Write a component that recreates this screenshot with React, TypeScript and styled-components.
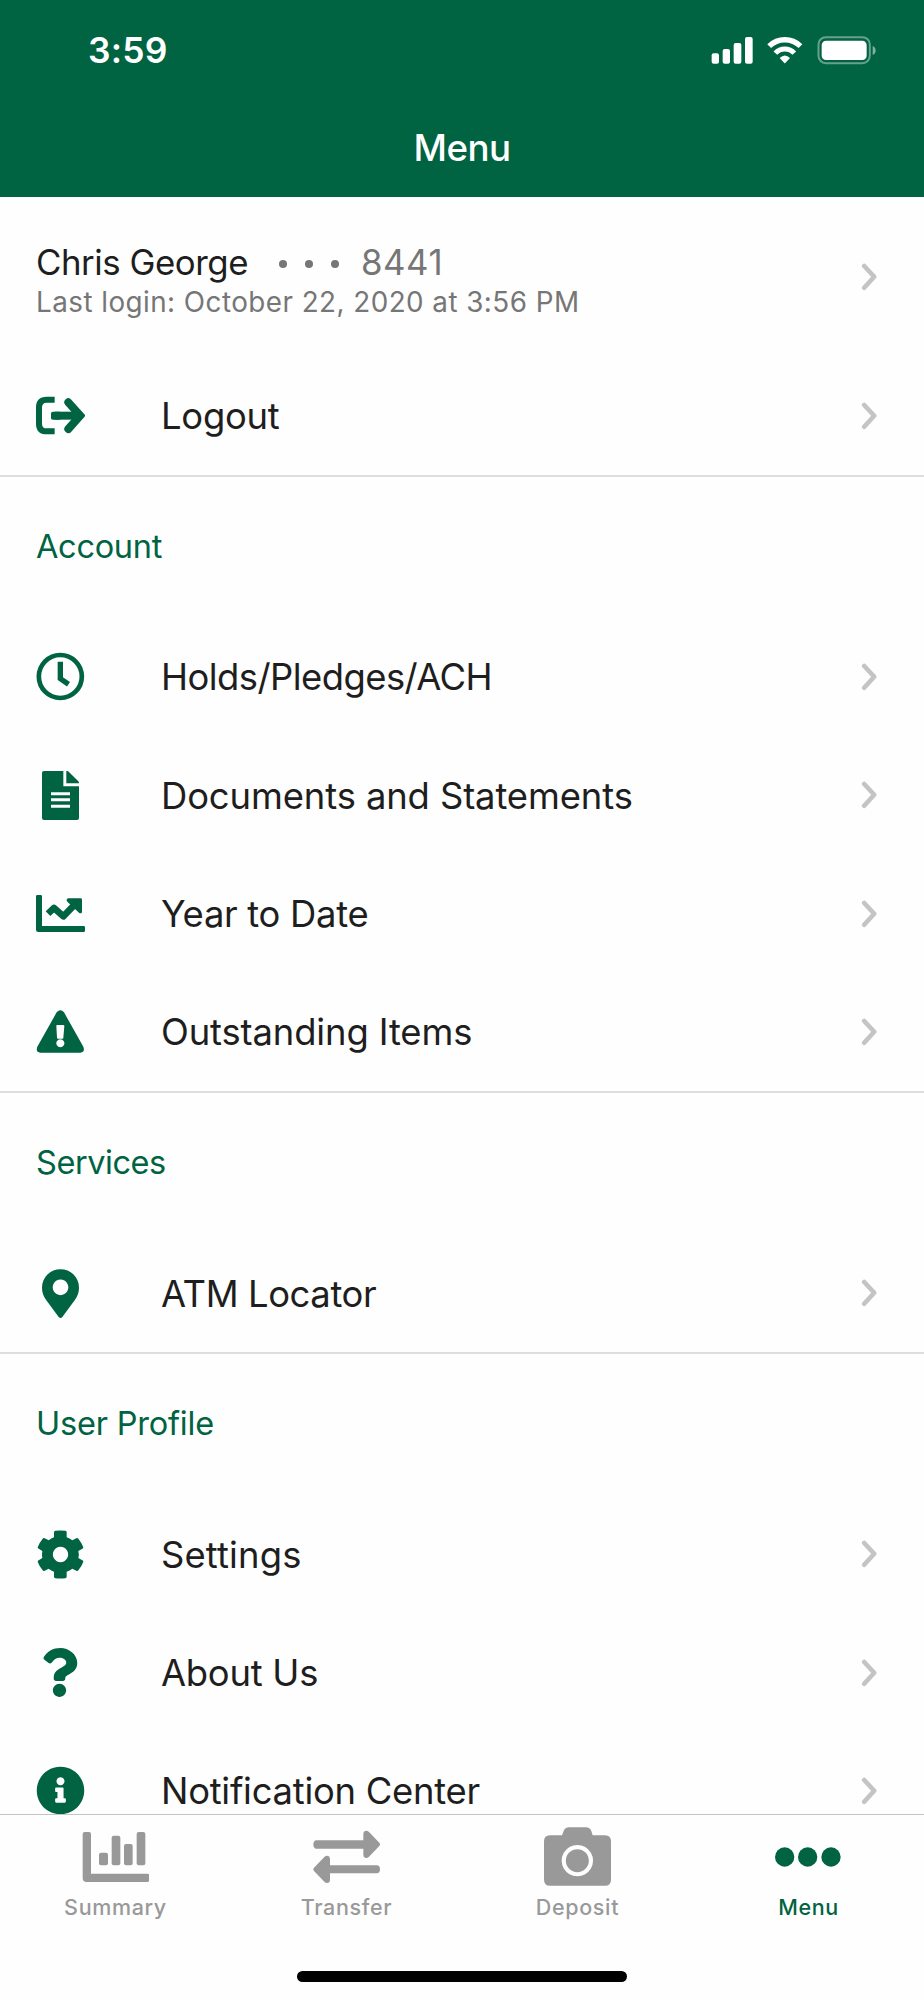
import React from "react";
import styled, { createGlobalStyle } from "styled-components";
import { FaInfoCircle, FaQuestion } from "react-icons/fa";

const GREEN = "#006341";
const INK = "#1e1e20";
const GREY = "#767676";

const GlobalStyle = createGlobalStyle`
  * { box-sizing: border-box; }
  body { margin: 0; background: #fff; font-family: Inter, "Liberation Sans", sans-serif; }
  svg { display: block; }
`;

const Screen = styled.div`
  width: 924px;
  height: 2000px;
  display: flex;
  flex-direction: column;
  background: #fefefe;
  overflow: hidden;
`;

const Header = styled.header`
  flex: none;
  height: 197px;
  background: ${GREEN};
  color: #fff;
`;

const StatusBar = styled.div`
  height: 100px;
  padding: 0 46px 0 88px;
  display: flex;
  align-items: center;
  justify-content: space-between;
`;

const Time = styled.span`
  padding-top: 2px;
  font-size: 35.4px;
  font-weight: 560;
  letter-spacing: 0.2px;
  line-height: 44px;
`;

const Title = styled.h1`
  margin: 0;
  font-size: 36.7px;
  font-weight: 550;
  letter-spacing: -0.5px;
  line-height: 96px;
  text-align: center;
`;

const List = styled.main`
  flex: 1;
  min-height: 0;
  overflow: hidden;
`;

const Group = styled.section`
  border-bottom: 2px solid #dedede;
`;

const GroupTitle = styled.h2<{ $tracking: number }>`
  margin: 0;
  height: 141px;
  padding: 0 36px 2px;
  display: flex;
  align-items: center;
  color: ${GREEN};
  font-size: 32.5px;
  font-weight: 400;
  letter-spacing: ${(p) => p.$tracking}px;
`;

const Row = styled.div<{ $tall?: boolean }>`
  height: ${(p) => (p.$tall ? "159.6px" : "118.27px")};
  padding: 0 46px 0 36px;
  display: flex;
  align-items: center;
`;

const IconSlot = styled.span`
  width: 125px;
  flex: none;
  display: flex;
`;

const IconBox = styled.span<{ $narrow?: boolean }>`
  width: ${(p) => (p.$narrow ? 47 : 49)}px;
  height: 49px;
  display: flex;
  align-items: center;
  justify-content: center;
  color: ${GREEN};
  font-size: 49px;

  svg { flex: none; }
`;

const Label = styled.span<{ $tracking: number }>`
  flex: 1;
  padding-top: 1px;
  color: ${INK};
  font-size: 36.4px;
  letter-spacing: ${(p) => p.$tracking}px;
  line-height: 44px;
  white-space: nowrap;
`;

const Profile = styled.div`
  flex: 1;
  padding-top: 9px;
  white-space: nowrap;
`;

const NameLine = styled.div`
  display: flex;
  align-items: center;
  height: 42px;
  font-size: 34.8px;
  letter-spacing: -0.45px;
  color: ${INK};
`;

const Mask = styled.span`
  width: 60px;
  margin: 3px 22px 0 31px;
  display: flex;
  justify-content: space-between;
`;

const MaskDot = styled.i`
  width: 8px;
  height: 8px;
  border-radius: 50%;
  background: ${GREY};
`;

const Suffix = styled.span`
  color: ${GREY};
  letter-spacing: 0.5px;
`;

const LastLogin = styled.div`
  color: ${GREY};
  font-size: 27.8px;
  letter-spacing: 0.46px;
  line-height: 38px;
`;

const TabBar = styled.nav`
  flex: none;
  height: 186px;
  border-top: 1px solid #c4c4c4;
  background: #fefefe;
`;

const Tabs = styled.div`
  height: 156px;
  display: grid;
  grid-template-columns: repeat(4, 1fr);
`;

const Tab = styled.div<{ $active?: boolean }>`
  padding-top: 11px;
  display: flex;
  flex-direction: column;
  align-items: center;
  color: ${(p) => (p.$active ? GREEN : "#999")};
`;

const TabLabel = styled.span`
  margin-top: 7px;
  font-size: 21.5px;
  font-weight: 500;
  letter-spacing: 0.65px;
  line-height: 28px;
`;

const HomeIndicator = styled.div`
  width: 330px;
  height: 11px;
  margin: 0 auto;
  border-radius: 6px;
  background: #000;
`;

const StatusIcons = () => (
  <svg width="166.67" height="30" viewBox="748 105 500 90" fill="#fff">
    <rect x="750" y="160" width="22" height="31" rx="6" />
    <rect x="783" y="147" width="22" height="44" rx="6" />
    <rect x="816" y="129" width="23" height="62" rx="6" />
    <rect x="850" y="111" width="23" height="80" rx="6" />
    <g fill="none" stroke="#fff">
      <path d="M922.5 138.500A67 67 0 0 1 1016.500 138.500" strokeWidth="16" />
      <path d="M941 159.500A38.500 38.500 0 0 1 998 159.500" strokeWidth="15" />
    </g>
    <path d="M954 174Q969.500 159 985 174L971 189q-1.500 1.500-3 0z" />
    <rect x="1070.500" y="111.500" width="154" height="78" rx="22" fill="none" stroke="#fff" strokeOpacity=".4" strokeWidth="6" />
    <rect x="1080" y="122" width="135" height="58" rx="13" />
    <path d="M1233 138q9 4 9 13.500t-9 13.500z" fillOpacity=".5" />
  </svg>
);

const Glyph = ({ children }: { children: React.ReactNode }) => (
  <svg width="49" height="49" viewBox="0 0 147 147" fill="currentColor">
    {children}
  </svg>
);

const LogoutIcon = () => (
  <Glyph>
    <g fill="none" stroke="currentColor">
      <path d="M56 26H32Q9 26 9 49V98Q9 121 32 121H56" strokeWidth="18" />
      <path d="M57 74H128" strokeWidth="24" strokeLinecap="butt" />
      <path d="M97 34L132.500 74L97 114" strokeWidth="24" strokeLinecap="round" />
    </g>
    <rect x="45" y="62" width="30" height="24" rx="5" />
  </Glyph>
);

const ClockIcon = () => (
  <Glyph>
    <g fill="none" stroke="currentColor">
      <circle cx="73" cy="73.500" r="64.500" strokeWidth="14" />
      <path d="M73 29.500V80L97.500 96.500" strokeWidth="16" />
    </g>
  </Glyph>
);

const FileIcon = () => (
  <Glyph>
    <path
      fillRule="evenodd"
      d="M24 0H82V46H129V141q0 6-6 6H24q-6 0-6-6V6q0-6 6-6zM45 64v9h57v-9zM45 82v9h57v-9zM45 101v9h57v-9z"
    />
    <path d="M91 0h3q2 0 4 2L127 31q2 2 2 4v2H91z" />
  </Glyph>
);

const TrendIcon = () => (
  <Glyph>
    <path d="M0 22q0-4 4-4h10q4 0 4 4V111H143q4 0 4 4v10q0 4-4 4H7q-7 0-7-7z" />
    <path d="M36 74L54 57L82 82L119 44" fill="none" stroke="currentColor" strokeWidth="20" strokeLinejoin="round" />
    <path d="M98 28H134q4 0 4 4V68c0 6-6 6-9 3L94 38c-4-4-2-10 4-10z" />
  </Glyph>
);

const WarningIcon = () => (
  <Glyph>
    <path
      fillRule="evenodd"
      d="M62 16Q73 3 84 16L142 119Q148 137 133 137H13Q-2 137 4 119zM63 54Q61 54 61 57L63 92Q63 95 66 95H80Q82 95 82 92L85 57Q85 54 82 54zM73 97a12 12 0 1 0 .1 0z"
    />
  </Glyph>
);

const PinIcon = () => (
  <Glyph>
    <path
      fillRule="evenodd"
      d="M18 56A55.500 55.500 0 0 1 129 56C129 72 124 82 116 94L79 144q-5.500 6-11 0L31 94C23 82 18 72 18 56zM73.500 31.500a23.500 23.500 0 1 0 .1 0z"
    />
  </Glyph>
);

const GearIcon = () => (
  <Glyph>
    <path
      fillRule="evenodd"
      d="M54 7Q54 3 58 2.500Q73 .5 88 2.500Q92 3 92 7V22Q101 25 109 31L121 25Q125 23 127 26Q137 38 142 52Q142 55 139 56L127 63Q130 73.500 127 84L139 91Q142 92 142 95Q137 109 127 121Q125 124 121 122L109 116Q101 122 92 125V140Q92 144 88 144.500Q73 146.500 58 144.500Q54 144 54 140V125Q46 122 38 116L26 122Q22 124 20 121Q10 109 5 95Q5 92 8 91L19 84Q17 73.500 19 63L8 56Q5 55 5 52Q10 38 20 26Q22 23 26 25L38 31Q46 25 54 22zM73.500 50.500a23 23 0 1 0 .1 0z"
    />
  </Glyph>
);

const Chevron = () => (
  <svg width="17" height="28" viewBox="0 0 17 28" fill="none" stroke="#c4c4c6" strokeWidth="4.600" strokeLinecap="round" strokeLinejoin="round">
    <path d="M3.200 3L13.200 13.800L3.200 24.700" />
  </svg>
);

const TabGlyph = ({ children }: { children: React.ReactNode }) => (
  <svg width="67" height="60" viewBox="0 0 201 180" fill="currentColor">
    {children}
  </svg>
);

const SummaryIcon = () => (
  <TabGlyph>
    <path d="M2 24q0-6 6-6h13q6 0 6 6V143H196q6 0 6 6v13q0 6-6 6H14q-12 0-12-12z" />
    <rect x="51" y="80" width="27" height="38" rx="6" />
    <rect x="89" y="29" width="26" height="89" rx="6" />
    <rect x="126" y="54" width="26" height="64" rx="6" />
    <rect x="164" y="18" width="26" height="100" rx="6" />
  </TabGlyph>
);

const TransferIcon = () => (
  <TabGlyph>
    <path d="M9 43H151V24C151 14 161 11 168 18L199 50q4 5 0 10L168 92C161 99 151 96 151 86V68H9Q1 66 1 55.500T9 43z" />
    <path d="M193 118H51V99C51 89 41 86 34 93L3 125q-4 5 0 10L34 167C41 174 51 171 51 161V142H193Q201 140 201 130T193 118z" />
  </TabGlyph>
);

const CameraIcon = () => (
  <TabGlyph>
    <path
      fillRule="evenodd"
      d="M18 28H54L59 15Q63 4 75 4H126Q138 4 142 15L146 28H183Q201 28 201 46V161Q201 179 183 179H18Q0 179 0 161V46Q0 28 18 28zM100 57a47 47 0 1 0 .1 0z"
    />
    <circle cx="100" cy="104" r="34.500" />
  </TabGlyph>
);

const DotsIcon = () => (
  <TabGlyph>
    <circle cx="29" cy="93" r="29" />
    <circle cx="98" cy="93" r="29" />
    <circle cx="168" cy="93" r="29" />
  </TabGlyph>
);

type Item = { label: string; icon: React.ReactNode; tracking: number; narrow?: boolean };

const MenuRow = ({ icon, label, tracking, narrow }: Item) => (
  <Row>
    <IconSlot>
      <IconBox $narrow={narrow}>{icon}</IconBox>
    </IconSlot>
    <Label $tracking={tracking}>{label}</Label>
    <Chevron />
  </Row>
);

const groups: { title: string; tracking: number; items: Item[] }[] = [
  {
    title: "Account",
    tracking: -0.3,
    items: [
      { label: "Holds/Pledges/ACH", icon: <ClockIcon />, tracking: -0.54 },
      { label: "Documents and Statements", icon: <FileIcon />, tracking: -0.11 },
      { label: "Year to Date", icon: <TrendIcon />, tracking: -0.3 },
      { label: "Outstanding Items", icon: <WarningIcon />, tracking: -0.13 },
    ],
  },
  {
    title: "Services",
    tracking: -0.45,
    items: [{ label: "ATM Locator", icon: <PinIcon />, tracking: -0.4 }],
  },
  {
    title: "User Profile",
    tracking: -0.2,
    items: [
      { label: "Settings", icon: <GearIcon />, tracking: 0.15 },
      { label: "About Us", icon: <FaQuestion />, tracking: -0.26, narrow: true },
      { label: "Notification Center", icon: <FaInfoCircle />, tracking: -0.26 },
    ],
  },
];

const tabs = [
  { label: "Summary", icon: <SummaryIcon /> },
  { label: "Transfer", icon: <TransferIcon /> },
  { label: "Deposit", icon: <CameraIcon /> },
  { label: "Menu", icon: <DotsIcon />, active: true },
];

export default function App() {
  return (
    <Screen>
      <GlobalStyle />
      <Header>
        <StatusBar>
          <Time>3:59</Time>
          <StatusIcons />
        </StatusBar>
        <Title>Menu</Title>
      </Header>
      <List>
        <Group>
          <Row $tall>
            <Profile>
              <NameLine>
                Chris George
                <Mask>
                  <MaskDot />
                  <MaskDot />
                  <MaskDot />
                </Mask>
                <Suffix>8441</Suffix>
              </NameLine>
              <LastLogin>Last login: October 22, 2020 at 3:56 PM</LastLogin>
            </Profile>
            <Chevron />
          </Row>
          <MenuRow icon={<LogoutIcon />} label="Logout" tracking={-0.25} />
        </Group>
        {groups.map((g) => (
          <Group key={g.title}>
            <GroupTitle $tracking={g.tracking}>{g.title}</GroupTitle>
            {g.items.map((i) => (
              <MenuRow key={i.label} {...i} />
            ))}
          </Group>
        ))}
      </List>
      <TabBar>
        <Tabs>
          {tabs.map((t) => (
            <Tab key={t.label} $active={t.active}>
              {t.icon}
              <TabLabel>{t.label}</TabLabel>
            </Tab>
          ))}
        </Tabs>
        <HomeIndicator />
      </TabBar>
    </Screen>
  );
}
